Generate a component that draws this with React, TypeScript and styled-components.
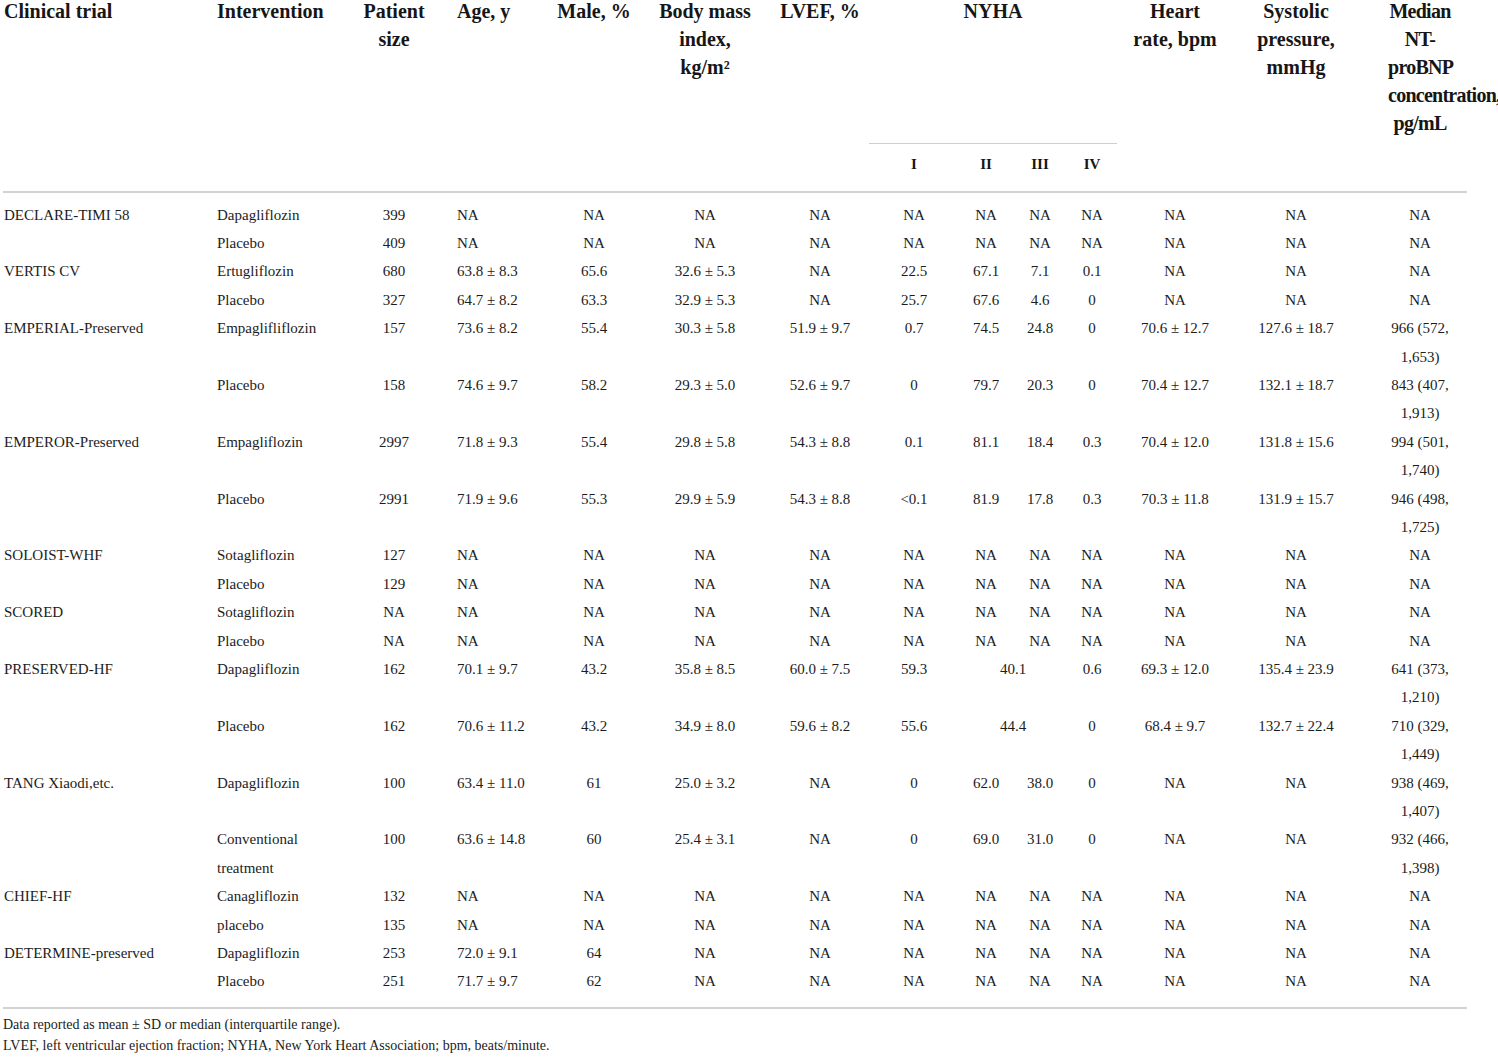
import React from "react";
import styled, { createGlobalStyle } from "styled-components";

const GlobalStyle = createGlobalStyle`
  html, body {
    margin: 0;
    padding: 0;
    background: #ffffff;
  }
  body {
    font-family: "Liberation Serif", "Times New Roman", serif;
    color: #1c1c1c;
  }
`;

type Align = "left" | "center";
interface ColSpec {
  w: number;
  align: Align;
  pl: number;
  pr: number;
}

const C = (w: number): ColSpec => ({ w, align: "center", pl: 4, pr: 4 });

const COLS: ColSpec[] = [
  { w: 207, align: "left", pl: 1, pr: 4 },
  { w: 133, align: "left", pl: 7, pr: 4 },
  C(102),
  { w: 104, align: "left", pl: 12, pr: 4 },
  C(90),
  C(132),
  C(98),
  C(90),
  C(54),
  C(54),
  C(50),
  C(116),
  C(126),
  { w: 108, align: "center", pl: 29, pr: 15 },
];

const Page = styled.div`
  padding: 0 0 20px 3px;
  margin-top: -3px;
`;

const Table = styled.table`
  width: 1464px;
  table-layout: fixed;
  border-collapse: collapse;
  border-spacing: 0;
`;

const HeadCell = styled.th<{ $align: Align; $pl: number; $pr: number; $tight?: boolean }>`
  font-family: "Liberation Serif", "Times New Roman", serif;
  font-weight: 700;
  font-size: 20px;
  line-height: 28px;
  letter-spacing: ${(p) => (p.$tight ? "-0.75px" : "0")};
  text-align: ${(p) => p.$align};
  vertical-align: top;
  white-space: pre;
  padding: 0 ${(p) => p.$pr}px 0 ${(p) => p.$pl}px;
  border-bottom: 2px solid #d2d2d2;
  color: #161616;
`;

const GroupCell = styled.th`
  font-family: "Liberation Serif", "Times New Roman", serif;
  font-weight: 700;
  font-size: 20px;
  line-height: 28px;
  text-align: center;
  vertical-align: top;
  height: 146px;
  padding: 0;
  box-sizing: border-box;
  border-bottom: 1px solid #cfcfcf;
  color: #161616;
`;

const SubHeadCell = styled.th`
  font-family: "Liberation Serif", "Times New Roman", serif;
  font-weight: 700;
  font-size: 15px;
  line-height: 28px;
  text-align: center;
  vertical-align: top;
  padding: 6px 0 13px;
  border-bottom: 2px solid #d2d2d2;
  color: #161616;
`;

const Td = styled.td<{
  $align: Align;
  $pl: number;
  $pr: number;
  $first: boolean;
  $last: boolean;
}>`
  font-size: 15px;
  line-height: 28.4px;
  text-align: ${(p) => p.$align};
  vertical-align: top;
  white-space: pre;
  padding: ${(p) => (p.$first ? 8 : 0)}px ${(p) => p.$pr}px
    ${(p) => (p.$last ? 11 : 0)}px ${(p) => p.$pl}px;
  border-bottom: ${(p) => (p.$last ? "2px solid #d2d2d2" : "none")};
`;

const Notes = styled.div`
  margin-top: 5px;
  font-size: 14px;
  line-height: 21px;
  color: #1c1c1c;
`;

type Cell = string | { v: string; span: number };
interface Row {
  trial?: string;
  cells: Cell[];
}

const NA11 = (): Cell[] => Array(11).fill("NA");

const allNA = (arm: string, n: string): Cell[] => [arm, n, ...NA11()];

const ROWS: Row[] = [
  { trial: "DECLARE-TIMI 58", cells: allNA("Dapagliflozin", "399") },
  { cells: allNA("Placebo", "409") },
  {
    trial: "VERTIS CV",
    cells: ["Ertugliflozin", "680", "63.8 ± 8.3", "65.6", "32.6 ± 5.3", "NA", "22.5", "67.1", "7.1", "0.1", "NA", "NA", "NA"],
  },
  {
    cells: ["Placebo", "327", "64.7 ± 8.2", "63.3", "32.9 ± 5.3", "NA", "25.7", "67.6", "4.6", "0", "NA", "NA", "NA"],
  },
  {
    trial: "EMPERIAL-Preserved",
    cells: ["Empaglifliflozin", "157", "73.6 ± 8.2", "55.4", "30.3 ± 5.8", "51.9 ± 9.7", "0.7", "74.5", "24.8", "0", "70.6 ± 12.7", "127.6 ± 18.7", "966 (572,\n1,653)"],
  },
  {
    cells: ["Placebo", "158", "74.6 ± 9.7", "58.2", "29.3 ± 5.0", "52.6 ± 9.7", "0", "79.7", "20.3", "0", "70.4 ± 12.7", "132.1 ± 18.7", "843 (407,\n1,913)"],
  },
  {
    trial: "EMPEROR-Preserved",
    cells: ["Empagliflozin", "2997", "71.8 ± 9.3", "55.4", "29.8 ± 5.8", "54.3 ± 8.8", "0.1", "81.1", "18.4", "0.3", "70.4 ± 12.0", "131.8 ± 15.6", "994 (501,\n1,740)"],
  },
  {
    cells: ["Placebo", "2991", "71.9 ± 9.6", "55.3", "29.9 ± 5.9", "54.3 ± 8.8", "<0.1", "81.9", "17.8", "0.3", "70.3 ± 11.8", "131.9 ± 15.7", "946 (498,\n1,725)"],
  },
  { trial: "SOLOIST-WHF", cells: allNA("Sotagliflozin", "127") },
  { cells: allNA("Placebo", "129") },
  { trial: "SCORED", cells: allNA("Sotagliflozin", "NA") },
  { cells: allNA("Placebo", "NA") },
  {
    trial: "PRESERVED-HF",
    cells: ["Dapagliflozin", "162", "70.1 ± 9.7", "43.2", "35.8 ± 8.5", "60.0 ± 7.5", "59.3", { v: "40.1", span: 2 }, "0.6", "69.3 ± 12.0", "135.4 ± 23.9", "641 (373,\n1,210)"],
  },
  {
    cells: ["Placebo", "162", "70.6 ± 11.2", "43.2", "34.9 ± 8.0", "59.6 ± 8.2", "55.6", { v: "44.4", span: 2 }, "0", "68.4 ± 9.7", "132.7 ± 22.4", "710 (329,\n1,449)"],
  },
  {
    trial: "TANG Xiaodi,etc.",
    cells: ["Dapagliflozin", "100", "63.4 ± 11.0", "61", "25.0 ± 3.2", "NA", "0", "62.0", "38.0", "0", "NA", "NA", "938 (469,\n1,407)"],
  },
  {
    cells: ["Conventional\ntreatment", "100", "63.6 ± 14.8", "60", "25.4 ± 3.1", "NA", "0", "69.0", "31.0", "0", "NA", "NA", "932 (466,\n1,398)"],
  },
  { trial: "CHIEF-HF", cells: allNA("Canagliflozin", "132") },
  { cells: allNA("placebo", "135") },
  {
    trial: "DETERMINE-preserved",
    cells: ["Dapagliflozin", "253", "72.0 ± 9.1", "64", "NA", "NA", "NA", "NA", "NA", "NA", "NA", "NA", "NA"],
  },
  {
    cells: ["Placebo", "251", "71.7 ± 9.7", "62", "NA", "NA", "NA", "NA", "NA", "NA", "NA", "NA", "NA"],
  },
];

interface HeadSpec {
  label: string;
  col: number;
  tight?: boolean;
}

const HEAD: HeadSpec[] = [
  { label: "Clinical trial", col: 0 },
  { label: "Intervention", col: 1 },
  { label: "Patient\nsize", col: 2 },
  { label: "Age, y", col: 3 },
  { label: "Male, %", col: 4 },
  { label: "Body mass\nindex,\nkg/m²", col: 5 },
  { label: "LVEF, %", col: 6 },
];

const HEAD_AFTER: HeadSpec[] = [
  { label: "Heart\nrate, bpm", col: 11 },
  { label: "Systolic\npressure,\nmmHg", col: 12 },
  { label: "Median\nNT-\nproBNP\nconcentration,\npg/mL", col: 13, tight: true },
];

const renderHead = (h: HeadSpec) => {
  const s = COLS[h.col];
  return (
    <HeadCell key={h.col} rowSpan={2} $align={s.align} $pl={s.pl} $pr={s.pr} $tight={h.tight}>
      {h.label}
    </HeadCell>
  );
};

export default function App() {
  return (
    <>
      <GlobalStyle />
      <Page>
        <Table>
          <colgroup>
            {COLS.map((c, i) => (
              <col key={i} style={{ width: c.w }} />
            ))}
          </colgroup>
          <thead>
            <tr>
              {HEAD.map(renderHead)}
              <GroupCell colSpan={4}>NYHA</GroupCell>
              {HEAD_AFTER.map(renderHead)}
            </tr>
            <tr>
              {["I", "II", "III", "IV"].map((r) => (
                <SubHeadCell key={r}>{r}</SubHeadCell>
              ))}
            </tr>
          </thead>
          <tbody>
            {ROWS.map((row, ri) => {
              const first = ri === 0;
              const last = ri === ROWS.length - 1;
              const s0 = COLS[0];
              let col = 1;
              return (
                <tr key={ri}>
                  <Td $align={s0.align} $pl={s0.pl} $pr={s0.pr} $first={first} $last={last}>
                    {row.trial ?? ""}
                  </Td>
                  {row.cells.map((cell, ci) => {
                    const v = typeof cell === "string" ? cell : cell.v;
                    const span = typeof cell === "string" ? 1 : cell.span;
                    const s = COLS[col];
                    col += span;
                    return (
                      <Td
                        key={ci}
                        colSpan={span}
                        $align={s.align}
                        $pl={s.pl}
                        $pr={s.pr}
                        $first={first}
                        $last={last}
                      >
                        {v}
                      </Td>
                    );
                  })}
                </tr>
              );
            })}
          </tbody>
        </Table>
        <Notes>
          Data reported as mean ± SD or median (interquartile range).
          <br />
          LVEF, left ventricular ejection fraction; NYHA, New York Heart Association; bpm, beats/minute.
        </Notes>
      </Page>
    </>
  );
}
